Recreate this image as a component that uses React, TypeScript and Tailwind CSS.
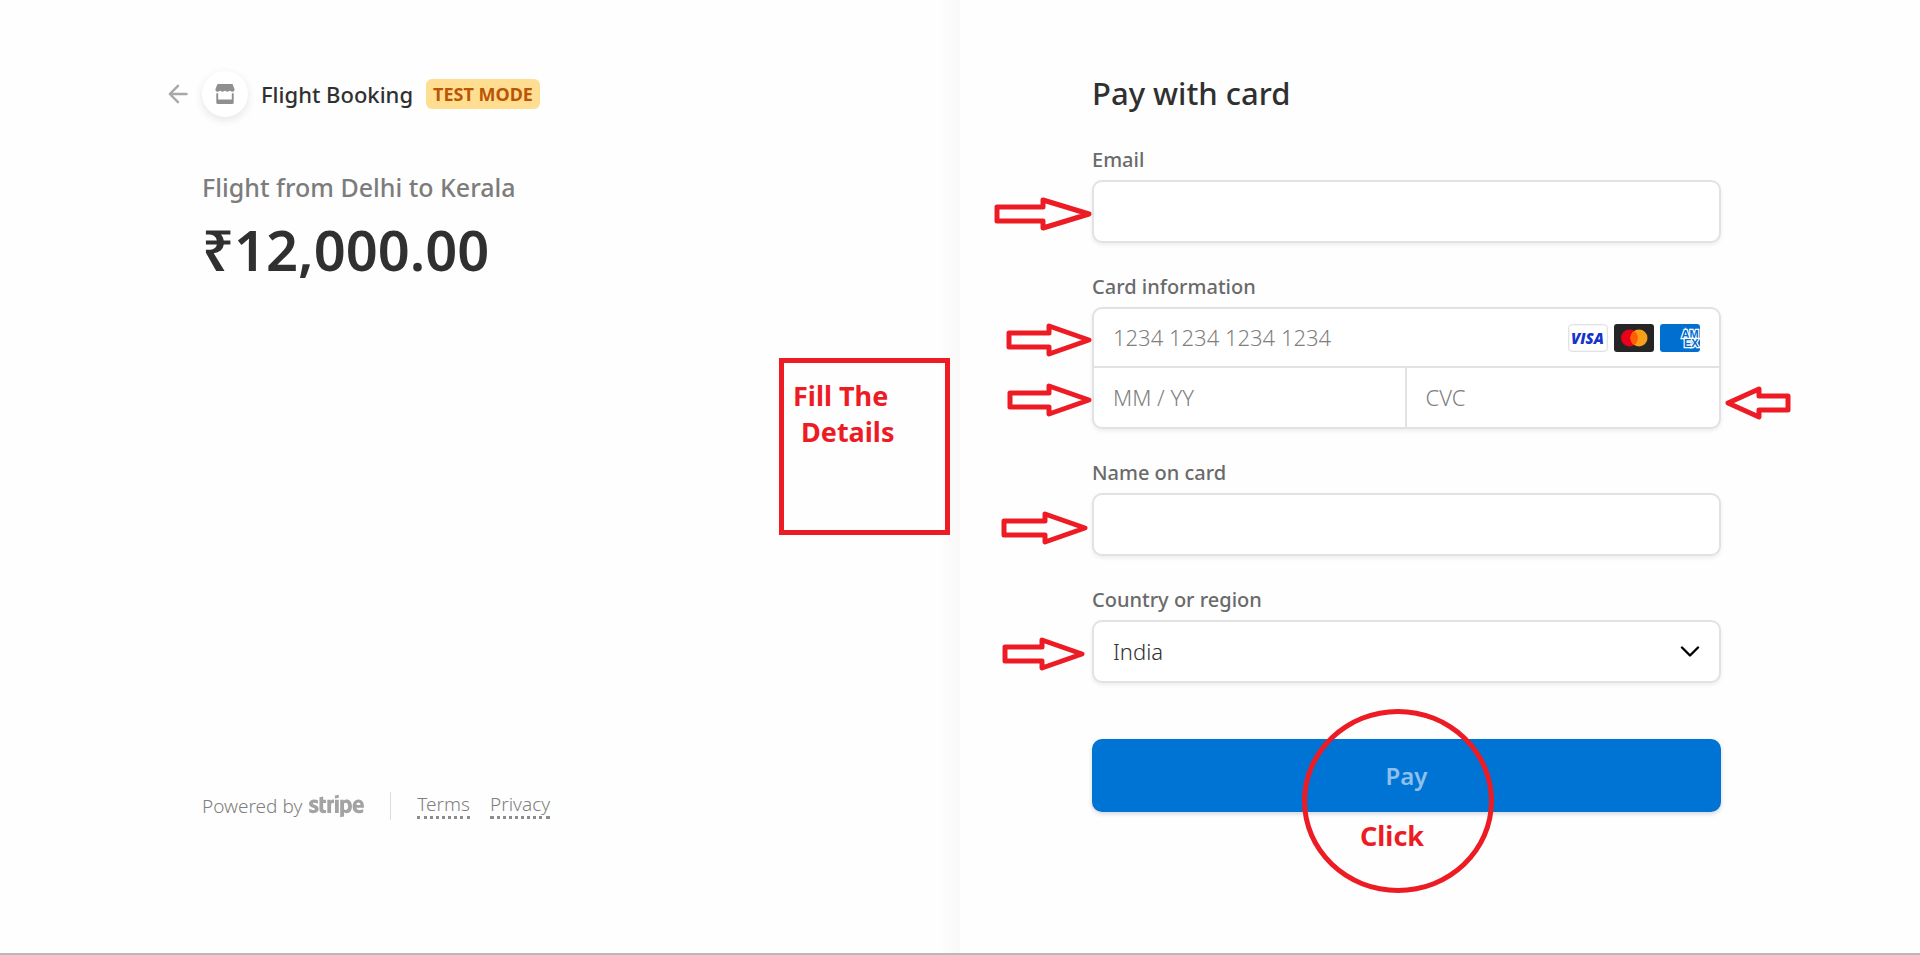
import type { ReactNode } from "react";
import { FaStripe } from "react-icons/fa";

const RED = "#ed1c24";

type ArrowProps = {
  width: number;
  height: number;
  head: number;
  flip?: boolean;
  className: string;
};

function Arrow({ width, height, head, flip = false, className }: ArrowProps) {
  const neck = width - head;
  const mid = height / 2;
  const tail = 7;
  const d = `M3 ${mid - tail}H${neck}V3L${width - 3} ${mid}L${neck} ${height - 3}V${mid + tail}H3Z`;
  return (
    <svg
      aria-hidden="true"
      width={width}
      height={height}
      viewBox={`0 0 ${width} ${height}`}
      className={`pointer-events-none absolute ${className}`}
    >
      <path
        d={d}
        fill="none"
        stroke={RED}
        strokeWidth={5}
        strokeLinejoin="round"
        transform={flip ? `translate(${width} 0) scale(-1 1)` : undefined}
      />
    </svg>
  );
}

function VisaCard() {
  return (
    <svg viewBox="0 0 40 28" className="h-7 w-10" role="img" aria-label="Visa">
      <rect x="0.75" y="0.75" width="38.5" height="26.5" rx="3" fill="#fff" stroke="#d9d9d9" />
      <text
        x="19.5"
        y="19.5"
        textAnchor="middle"
        fontFamily="Open Sans, sans-serif"
        fontSize="15"
        fontWeight="800"
        fontStyle="italic"
        fill="#1434cb"
      >
        VISA
      </text>
    </svg>
  );
}

function MastercardCard() {
  return (
    <svg viewBox="0 0 40 28" className="h-7 w-10" role="img" aria-label="Mastercard">
      <rect width="40" height="28" rx="3" fill="#252525" />
      <circle cx="15.5" cy="14" r="8.5" fill="#eb001b" />
      <circle cx="25" cy="14" r="8.5" fill="#f79e1b" />
      <path d="M20.200 7a8.500 8.500 0 0 1 0 14a8.500 8.500 0 0 1 0-14Z" fill="#ff5f00" />
    </svg>
  );
}

function AmexCard() {
  return (
    <svg viewBox="0 0 40 28" className="h-7 w-10" role="img" aria-label="American Express">
      <defs>
        <clipPath id="amex-clip">
          <rect width="40" height="28" rx="3" />
        </clipPath>
      </defs>
      <g clipPath="url(#amex-clip)">
        <rect width="40" height="28" fill="#016fd0" />
        <g
          fontFamily="Liberation Sans, sans-serif"
          fontSize="11"
          fontWeight="700"
          fill="#016fd0"
          stroke="#fff"
          strokeWidth="2.4"
          paintOrder="stroke"
        >
          <text x="21.5" y="13.5">AM</text>
          <text x="24" y="22.5">EX</text>
        </g>
      </g>
    </svg>
  );
}

function Field({ id, label, children }: { id: string; label: string; children: ReactNode }) {
  return (
    <div>
      <label htmlFor={id} className="block h-10 text-[20px] leading-10 font-medium text-[#6a6a6a]">
        {label}
      </label>
      <div className="relative">{children}</div>
    </div>
  );
}

const boxClass =
  "block h-[63px] w-full rounded-[10px] border-2 border-[#e2e2e2] bg-white px-[19px] text-[22px] font-light text-[#303030] shadow-[0_2px_4px_rgba(0,0,0,0.07)] outline-none placeholder:text-[#808080]";
const cellClass =
  "w-full bg-transparent px-[19px] text-[22px] font-light text-[#303030] outline-none placeholder:text-[#808080]";

function Summary() {
  return (
    <section className="flex flex-col justify-between pt-[70px] pb-[131px] pl-[168px]">
      <div>
        <header className="flex h-12 items-center">
          <a href="#back" aria-label="Back" className="mr-3.5 block">
            <svg viewBox="0 0 20 20" className="h-5 w-5" fill="none" stroke="#a8a8a8" strokeWidth="2.4" strokeLinecap="round" strokeLinejoin="round">
              <path d="M18.500 10H2M10 1.800L1.800 10l8.200 8.200" />
            </svg>
          </a>
          <span className="flex h-[46px] w-[46px] items-center justify-center rounded-full bg-white shadow-[0_3px_8px_rgba(50,50,93,0.12)]">
            <svg viewBox="0 0 20 20" className="h-5 w-5" fill="#8f8f8f" aria-hidden="true">
              <path d="M2.500 0h15L19.600 5.200c.2 1.500-1 2.600-2.400 2.600-1 0-1.900-.5-2.400-1.200-.5.7-1.400 1.200-2.400 1.200S10.500 7.300 10 6.600C9.500 7.300 8.600 7.800 7.600 7.800S5.700 7.300 5.200 6.600C4.700 7.300 3.800 7.800 2.800 7.800 1.400 7.800.2 6.700.4 5.200Z" />
              <path d="M1.300 9.300H3.200V15.400H16.800V9.300H18.700V18.500a1.500 1.500 0 0 1-1.500 1.500H2.800a1.500 1.500 0 0 1-1.500-1.500Z" />
            </svg>
          </span>
          <span className="ml-[13px] text-[22px] font-medium text-[#303030]">Flight Booking</span>
          <span className="ml-[13px] rounded-md bg-[#ffde92] px-[7px] text-[18px] leading-[30px] font-bold text-[#bb5504]">
            TEST MODE
          </span>
        </header>
        <div className="pt-[50px] pl-[34px]">
          <h2 className="text-[25px] leading-[38px] font-medium text-[#7c7c7c]">Flight from Delhi to Kerala</h2>
          <p className="text-[56px] leading-[86px] font-semibold text-[#303030]">₹12,000.00</p>
        </div>
      </div>
      <footer className="flex h-8 items-center pl-[34px] text-[19px] font-light text-[#808080]">
        <span>Powered by</span>
        <FaStripe className="ml-[7px] h-11 w-[55px] text-[#a3a3a3]" aria-label="Stripe" />
        <span className="mx-[26px] h-7 w-px bg-[#dcdcdc]" />
        <a href="#terms" className="mr-5 border-b-3 border-dotted border-[#8c8c8c] leading-[23px]">
          Terms
        </a>
        <a href="#privacy" className="border-b-3 border-dotted border-[#8c8c8c] leading-[23px]">
          Privacy
        </a>
      </footer>
    </section>
  );
}

function PaymentForm() {
  return (
    <form className="flex w-full max-w-[629px] flex-col gap-6">
      <h1 className="text-[31px] leading-[45px] font-medium text-[#303030]">Pay with card</h1>
      <Field id="email" label="Email">
        <input id="email" type="email" className={boxClass} />
        <Arrow width={98} height={34} head={49} className="top-[17px] right-full" />
      </Field>
      <Field id="card-number" label="Card information">
        <div className="rounded-[10px] border-2 border-[#e2e2e2] bg-white shadow-[0_2px_4px_rgba(0,0,0,0.07)]">
          <div className="flex h-[59px] items-center border-b-2 border-[#e2e2e2] pr-[19px]">
            <input id="card-number" className={cellClass} placeholder="1234 1234 1234 1234" />
            <div className="flex shrink-0 gap-1.5">
              <VisaCard />
              <MastercardCard />
              <AmexCard />
            </div>
          </div>
          <div className="grid h-[59px] grid-cols-2">
            <input aria-label="Expiry date" className={`border-r-2 border-[#e2e2e2] ${cellClass}`} placeholder="MM / YY" />
            <input aria-label="Security code" className={cellClass} placeholder="CVC" />
          </div>
        </div>
        <Arrow width={86} height={34} head={43} className="top-4 right-full" />
        <Arrow width={85} height={34} head={43} className="top-[76px] right-full" />
        <Arrow width={66} height={34} head={34} flip className="top-[79px] left-full ml-1" />
      </Field>
      <Field id="name" label="Name on card">
        <input id="name" className={boxClass} />
        <Arrow width={87} height={34} head={43} className="top-[18px] right-full mr-1" />
      </Field>
      <Field id="country" label="Country or region">
        <select id="country" className={`appearance-none ${boxClass}`}>
          <option>India</option>
        </select>
        <svg
          aria-hidden="true"
          viewBox="0 0 20 12"
          className="pointer-events-none absolute top-[26px] right-[21px] h-3 w-5"
          fill="none"
          stroke="#000"
          strokeWidth="2.4"
          strokeLinecap="round"
          strokeLinejoin="round"
        >
          <path d="M2 1.500l8 8 8-8" />
        </svg>
        <Arrow width={83} height={34} head={43} className="top-[17px] right-full mr-[7px]" />
      </Field>
      <div className="relative mt-8">
        <button
          type="button"
          className="block h-[73px] w-full rounded-[10px] bg-[#0074d4] text-[24px] font-semibold text-[#8fc0ec] shadow-[0_2px_4px_rgba(50,50,93,0.2)]"
        >
          Pay
        </button>
        <div className="pointer-events-none absolute -top-[30px] left-[210px] flex h-[184px] w-[192px] justify-center rounded-[50%] border-5 border-[#ed1c24] pt-[104px] pr-3 text-[27px] leading-9 font-bold text-[#ed1c24]">
          Click
        </div>
      </div>
    </form>
  );
}

export default function App() {
  return (
    <main
      className="relative grid min-h-screen grid-cols-2 border-b-2 border-[#b9b9b9] bg-[#fefefe]"
      style={{ fontFamily: '"Noto Sans", "Open Sans", sans-serif' }}
    >
      <div className="grid bg-linear-to-l from-[#f8f8f8] to-[#fefefe] to-[20px]">
        <Summary />
      </div>
      <div className="pt-[71px] pl-[132px]">
        <PaymentForm />
      </div>
      <aside className="pointer-events-none absolute top-[358px] right-1/2 mr-2.5 h-[177px] w-[171px] border-5 border-[#ed1c24] pt-[15px] pl-[9px] text-[27px] leading-9 font-bold text-[#ed1c24]">
        <p>Fill The</p>
        <p className="pl-2">Details</p>
      </aside>
    </main>
  );
}
